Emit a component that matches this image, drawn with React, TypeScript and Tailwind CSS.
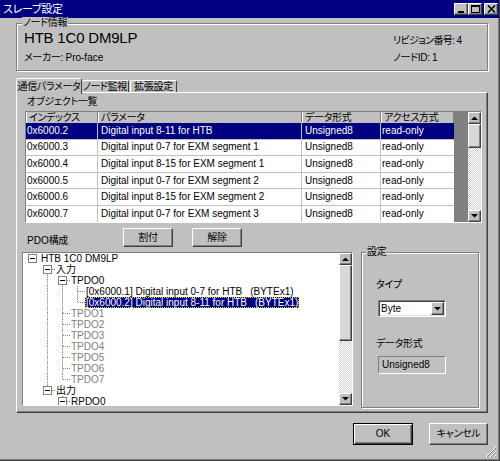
import React from 'react'

const raised =
  'bg-[#c0c0c0] border border-t-white border-l-white border-r-[#404040] border-b-[#404040] shadow-[inset_-1px_-1px_0_#808080]'
const sunken =
  'border border-t-[#808080] border-l-[#808080] border-r-white border-b-white shadow-[inset_1px_1px_0_#404040,inset_-1px_-1px_0_#dfdfdf]'
const etched = 'border border-[#808080] shadow-[inset_1px_1px_0_#fff,1px_1px_0_#fff]'
const latin = 'text-[10px] tracking-normal'

const rows = [
  ['0x6000.2', 'Digital input 8-11 for HTB'],
  ['0x6000.3', 'Digital input 0-7 for EXM segment 1'],
  ['0x6000.4', 'Digital input 8-15 for EXM segment 1'],
  ['0x6000.5', 'Digital input 0-7 for EXM segment 2'],
  ['0x6000.6', 'Digital input 8-15 for EXM segment 2'],
  ['0x6000.7', 'Digital input 0-7 for EXM segment 3'],
]

function Arrow({ dir }: { dir: 'up' | 'down' }) {
  return (
    <svg width="7" height="4" className="block">
      {dir === 'up' ? <polygon points="0,4 3.5,0.5 7,4" fill="#000" /> : <polygon points="0,0 3.5,3.5 7,0" fill="#000" />}
    </svg>
  )
}

function ScrollBar({ thumb }: { thumb: number }) {
  return (
    <div className="w-[13px] flex flex-col shrink-0">
      <div className={`${raised} h-[12px] flex items-center justify-center`}>
        <Arrow dir="up" />
      </div>
      <div className={`${raised} bg-[#d8d8d8]`} style={{ height: thumb }} />
      <div className="flex-1 bg-[repeating-conic-gradient(#d0d0d0_0%_25%,#ffffff_0%_50%)] bg-[length:2px_2px]" />
      <div className={`${raised} h-[12px] flex items-center justify-center`}>
        <Arrow dir="down" />
      </div>
    </div>
  )
}

function TitleBtn({ kind }: { kind: 'min' | 'max' | 'close' }) {
  return (
    <div className={`${raised} w-[14px] h-[12px] flex items-center justify-center`}>
      <svg width="9" height="8" className="block">
        {kind === 'min' && <rect x="1" y="6" width="6" height="2" fill="#000" />}
        {kind === 'max' && (
          <>
            <rect x="0.5" y="0.5" width="8" height="7" fill="none" stroke="#000" />
            <rect x="0" y="0" width="9" height="2" fill="#000" />
          </>
        )}
        {kind === 'close' && <path d="M1 0.5 L8 7.5 M8 0.5 L1 7.5" stroke="#000" strokeWidth="1.6" />}
      </svg>
    </div>
  )
}

type G = { up?: boolean; down?: boolean; right?: boolean; box?: boolean }

function Glyph({ up, down, right, box }: G) {
  const ln = { stroke: '#808080', strokeDasharray: '1 1' }
  return (
    <svg width="15" height="11" className="block shrink-0">
      {up && <line x1="7.5" y1="0" x2="7.5" y2="5.5" {...ln} />}
      {down && <line x1="7.5" y1="5.5" x2="7.5" y2="11" {...ln} />}
      {right && <line x1="8" y1="5.5" x2="15" y2="5.5" {...ln} />}
      {box && (
        <>
          <rect x="3.5" y="1.5" width="8" height="8" fill="#fff" stroke="#808080" />
          <line x1="5" y1="5.5" x2="10" y2="5.5" stroke="#000" />
        </>
      )}
    </svg>
  )
}

const V: G = { up: true, down: true }
const E: G = {}

const tree: { g: G[]; text: string; tail?: string; gray?: boolean; sel?: boolean }[] = [
  { g: [{ box: true }], text: 'HTB 1C0 DM9LP' },
  { g: [E, { box: true, right: true, down: true }], text: '入力' },
  { g: [E, V, { box: true, right: true, down: true }], text: 'TPDO0' },
  { g: [E, V, V, { up: true, down: true, right: true }], text: '[0x6000.1] Digital input 0-7 for HTB', tail: '(BYTEx1)' },
  { g: [E, V, V, { up: true, right: true }], text: '[0x6000.2] Digital input 8-11 for HTB', tail: '(BYTEx1)', sel: true },
  ...[1, 2, 3, 4, 5, 6].map((n) => ({ g: [E, V, { up: true, down: true, right: true }], text: `TPDO${n}`, gray: true })),
  { g: [E, V, { up: true, right: true }], text: 'TPDO7', gray: true },
  { g: [E, { up: true, box: true, right: true }], text: '出力' },
  { g: [E, E, { up: true, box: true, right: true }], text: 'RPDO0' },
]

export default function App() {
  return (
    <div className="relative w-[500px] h-[461px] bg-[#c0c0c0] border-r border-b border-[#404040] shadow-[inset_-1px_-1px_0_#808080] text-[10px] leading-[12px] tracking-[-0.3px] text-black font-['Liberation_Sans','Noto_Sans_CJK_JP',sans-serif] [font-feature-settings:'palt'] overflow-hidden whitespace-nowrap">
      {/* title bar */}
      <div className="h-[18px] bg-[#000080] flex items-center justify-between pl-[3px] pr-[1px]">
        <span className="text-white text-[11px] leading-none">スレーブ設定</span>
        <div className="flex items-center">
          <TitleBtn kind="min" />
          <TitleBtn kind="max" />
          <div className="w-[2px]" />
          <TitleBtn kind="close" />
        </div>
      </div>

      <div className="pl-[16px] pr-[11px] flex flex-col">
        {/* node info */}
        <div className={`relative mt-[5px] h-[48px] ${etched} flex justify-between`}>
          <span className="absolute -top-[7px] left-[5px] bg-[#c0c0c0] px-[1px]">ノード情報</span>
          <div className="pl-[7px] pt-[4px] flex flex-col">
            <span className="text-[15px] leading-[20px] tracking-[-0.2px]">HTB 1C0 DM9LP</span>
            <span className="mt-[4px]">
              メーカー: <span className={latin}>Pro-face</span>
            </span>
          </div>
          <div className="w-[94px] pt-[11px] flex flex-col gap-[5px]">
            <span className="tracking-[-0.6px]">
              リビジョン番号: <span className={latin}>4</span>
            </span>
            <span>
              ノードID: <span className={latin}>1</span>
            </span>
          </div>
        </div>

        {/* tabs */}
        <div className="mt-[7px] h-[14px] flex items-start">
          <div className="relative z-10 w-[66px] h-[16px] bg-[#c0c0c0] border-t border-l border-r border-t-white border-l-white border-r-[#404040] rounded-t-[2px] flex items-center justify-center">
            通信パラメータ
          </div>
          <div className="mt-[2px] w-[47px] h-[12px] border-t border-r border-t-white border-r-[#404040] rounded-t-[2px] flex items-center justify-center">
            ノード監視
          </div>
          <div className="mt-[2px] ml-[1px] w-[47px] h-[12px] border-t border-l border-r border-t-white border-l-white border-r-[#404040] rounded-t-[2px] flex items-center justify-center">
            拡張設定
          </div>
        </div>

        {/* tab panel */}
        <div className="h-[321px] border border-t-white border-l-white border-r-[#404040] border-b-[#404040] shadow-[inset_-1px_-1px_0_#808080] flex flex-col">
          <span className="mt-[3px] pl-[10px]">オブジェクト一覧</span>

          {/* object table */}
          <div className={`mt-[3px] ml-[8px] w-[457px] h-[112px] ${sunken} flex overflow-hidden`}>
            <div className="w-[428px] flex flex-col shrink-0 bg-white">
              <div className="h-[11px] flex bg-[#c0c0c0] shrink-0">
                {[
                  ['インデックス', 'w-[72px]'],
                  ['パラメータ', 'w-[204px]'],
                  ['データ形式', 'w-[79px]'],
                  ['アクセス方式', 'w-[73px]'],
                ].map(([t, w]) => (
                  <div
                    key={t}
                    className={`${w} h-full border-r border-r-[#808080] shadow-[inset_1px_0_0_#fff] pl-[3px] flex items-center leading-[11px]`}
                  >
                    {t}
                  </div>
                ))}
              </div>
              {rows.map(([idx, name], i) => {
                const sel = i === 0
                return (
                  <div
                    key={idx}
                    className={`h-[16.6px] shrink-0 flex border-b border-[#c0c0c0] ${latin} ${sel ? 'bg-[#000080] text-white' : ''}`}
                  >
                    <div className="w-[72px] pl-[1px] border-r border-[#c0c0c0] flex items-center">{idx}</div>
                    <div className="w-[204px] pl-[3px] border-r border-[#c0c0c0] flex items-center">{name}</div>
                    <div className="w-[79px] pl-[3px] border-r border-[#c0c0c0] flex items-center">Unsigned8</div>
                    <div className="w-[73px] pl-[1px] flex items-center">read-only</div>
                  </div>
                )
              })}
            </div>
            <div className="flex-1 bg-[#808080]" />
            <ScrollBar thumb={24} />
          </div>

          {/* PDO buttons */}
          <div className="mt-[5px] pl-[10px] h-[19px] flex items-end">
            <span className="w-[96px] leading-[12px]">
              <span className={latin}>PDO</span>構成
            </span>
            <button className={`${raised} w-[50px] h-[19px] flex items-center justify-center`}>割付</button>
            <button className={`${raised} ml-[19px] w-[50px] h-[19px] flex items-center justify-center`}>解除</button>
          </div>

          <div className="mt-[5px] pl-[5px] flex items-start">
            {/* PDO tree */}
            <div className={`w-[331px] h-[154px] ${sunken} flex overflow-hidden`}>
              <div className="flex-1 bg-white pl-[2px] overflow-hidden leading-[11px]">
                {tree.map((r, i) => (
                  <div key={i} className="h-[11px] flex items-center">
                    {r.g.map((g, j) => (
                      <Glyph key={j} {...g} />
                    ))}
                    <span
                      className={`px-[1px] ${r.sel ? 'bg-[#000080] text-white outline-1 outline-dotted outline-[#e0e000] -outline-offset-1' : r.gray ? 'text-[#808080]' : ''}`}
                    >
                      <span className={latin}>{r.text}</span>
                      {r.tail && <span className={`${latin} ml-[8px]`}>{r.tail}</span>}
                    </span>
                  </div>
                ))}
              </div>
              <ScrollBar thumb={76} />
            </div>

            {/* settings */}
            <div className={`relative ml-[8px] w-[118px] h-[156px] ${etched} pl-[14px] pt-[26px] flex flex-col`}>
              <span className="absolute -top-[7px] left-[4px] bg-[#c0c0c0] px-[1px]">設定</span>
              <span>タイプ</span>
              <div className={`mt-[9px] ml-[2px] w-[68px] h-[17px] ${sunken} bg-white flex items-center`}>
                <span className={`flex-1 pl-[2px] ${latin}`}>Byte</span>
                <div className={`${raised} w-[13px] h-[13px] mr-[1px] flex items-center justify-center`}>
                  <Arrow dir="down" />
                </div>
              </div>
              <span className="mt-[21px]">データ形式</span>
              <div
                className={`mt-[6px] ml-[2px] w-[68px] h-[18px] border border-t-[#808080] border-l-[#808080] border-r-white border-b-white pl-[3px] pt-[2px] ${latin}`}
              >
                Unsigned8
              </div>
            </div>
          </div>
        </div>

        {/* OK / Cancel */}
        <div className="mt-[10px] flex justify-end gap-[16px]">
          <button
            className={`w-[60px] h-[22px] bg-[#c0c0c0] border border-black shadow-[inset_1px_1px_0_#fff,inset_-1px_-1px_0_#404040,inset_-2px_-2px_0_#808080] flex items-center justify-center ${latin}`}
          >
            OK
          </button>
          <button className={`${raised} w-[59px] h-[22px] flex items-center justify-center`}>キャンセル</button>
        </div>
      </div>

      {/* size grip */}
      <svg width="12" height="12" className="absolute right-[2px] bottom-[2px]">
        <path d="M11 1 L1 11 M11 5 L5 11 M11 9 L9 11" stroke="#fff" />
        <path d="M11 2 L2 11 M11 6 L6 11 M11 10 L10 11" stroke="#808080" />
      </svg>
    </div>
  )
}
